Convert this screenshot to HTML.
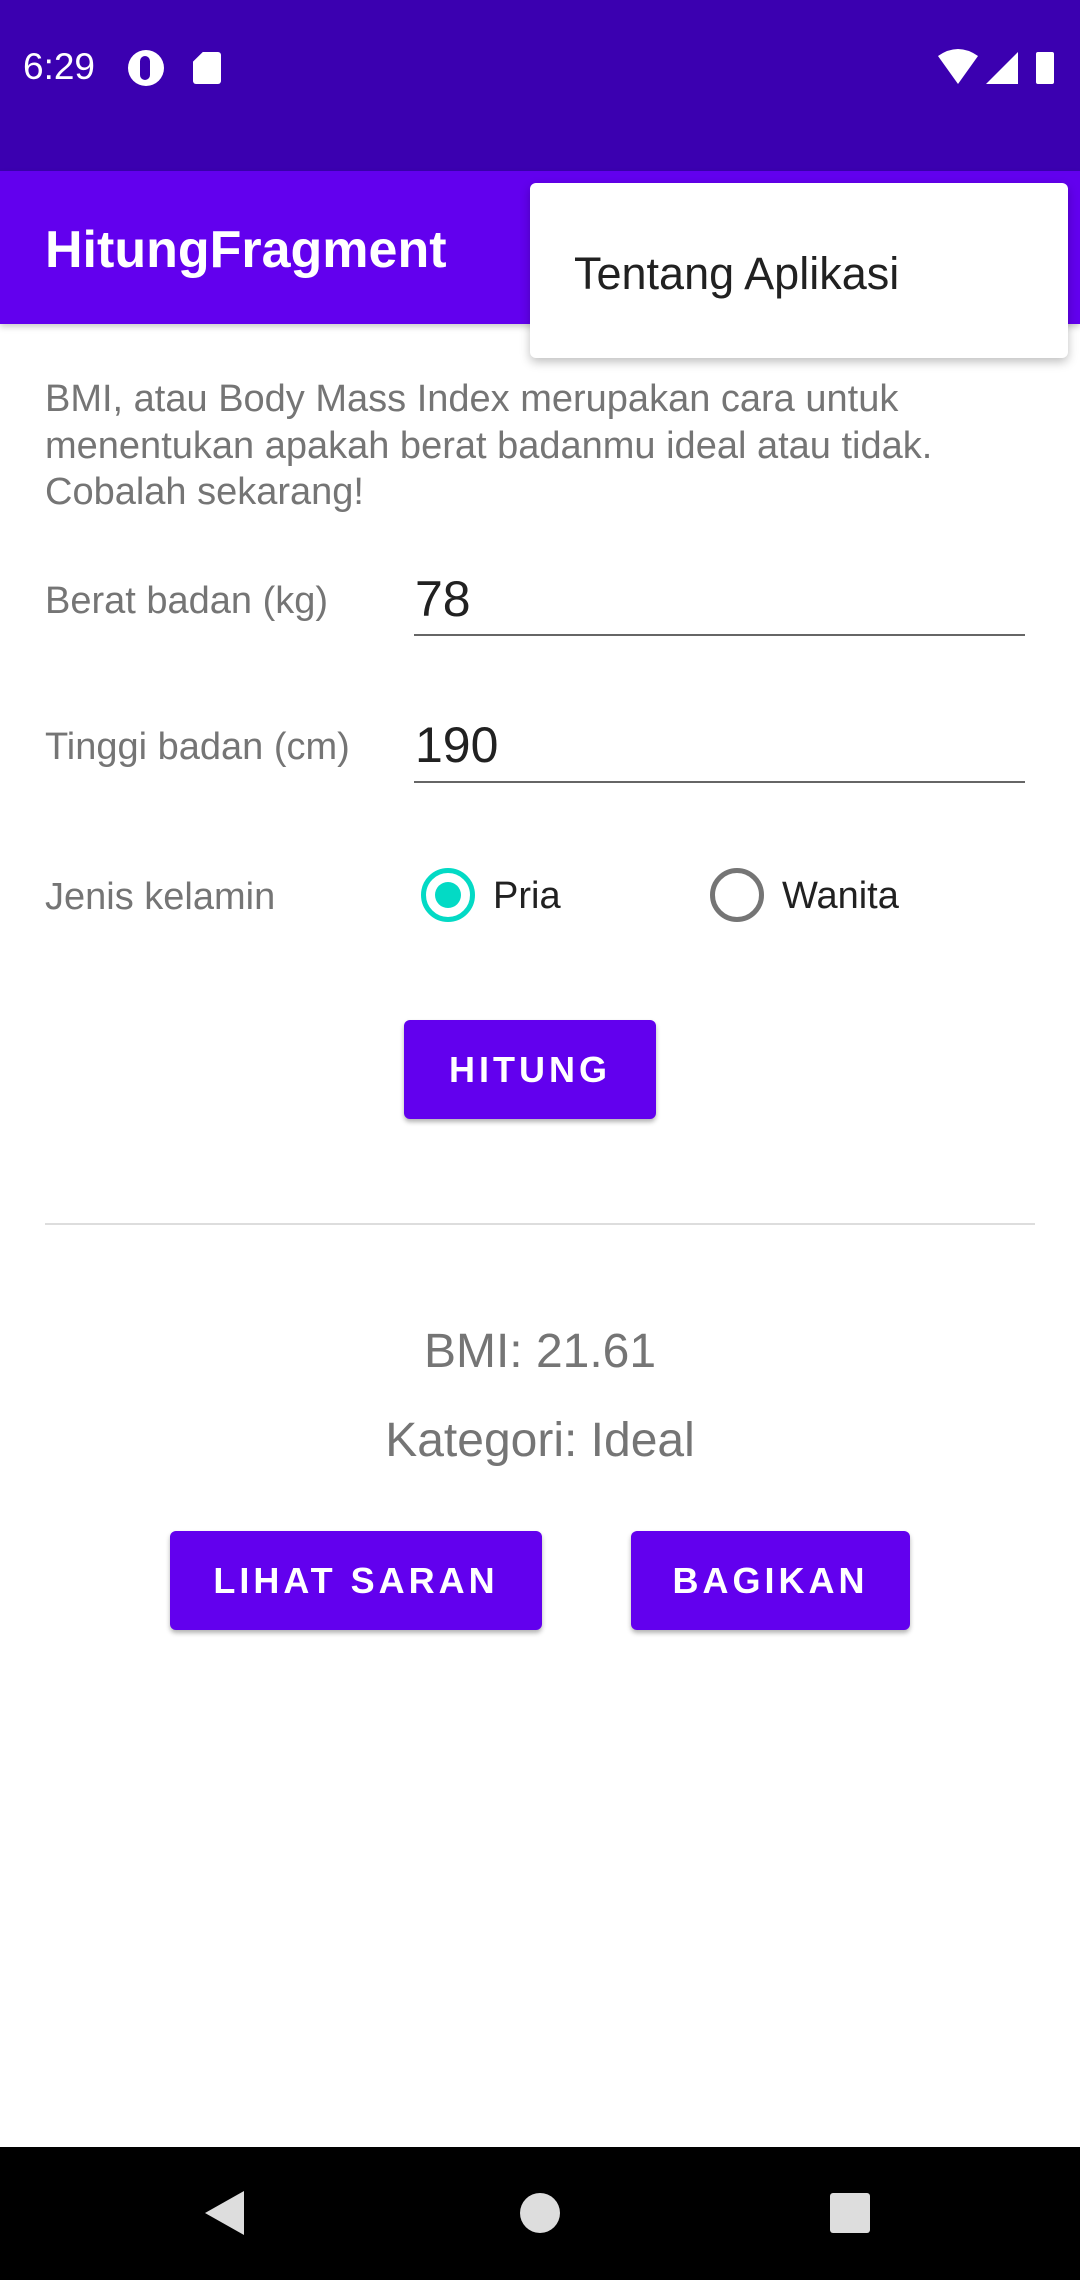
<!DOCTYPE html>
<html><head><meta charset="utf-8"><style>
*{margin:0;padding:0;box-sizing:border-box}
body{width:1080px;height:2280px;position:relative;background:#fff;font-family:"Liberation Sans",sans-serif;overflow:hidden}
.abs{position:absolute}
.lbl{color:#757575;font-size:38px;left:45px}
.btn{background:#6200EE;color:#fff;font-size:36px;font-weight:bold;letter-spacing:4px;border-radius:6px;display:flex;align-items:center;justify-content:center;box-shadow:0 3px 5px rgba(0,0,0,.3)}
</style></head><body>
<div class="abs" style="left:0;top:0;width:1080px;height:171px;background:#3b00b0"></div>
<div class="abs" style="left:23px;top:46px;color:#fff;font-size:37px">6:29</div>
<div class="abs" style="left:128px;top:50px;width:36px;height:36px;border-radius:50%;background:#fff"></div>
<div class="abs" style="left:140px;top:56px;width:10px;height:24px;border-radius:5px;background:#3b00b0"></div>
<div class="abs" style="left:193px;top:52px;width:28px;height:32px;background:#fff;border-radius:3px;clip-path:polygon(35% 0,100% 0,100% 100%,0 100%,0 30%)"></div>
<svg class="abs" style="left:936px;top:48px" width="120" height="40"><path d="M2 8 Q22 -6 42 8 L22 36Z" fill="#fff"/><path d="M50 36 L82 36 L82 4Z" fill="#fff"/><rect x="100" y="4" width="18" height="32" rx="2" fill="#fff"/></svg>
<div class="abs" style="left:0;top:171px;width:1080px;height:153px;background:#6200EE;box-shadow:0 3px 6px rgba(0,0,0,.2)"></div>
<div class="abs" style="left:45px;top:220px;color:#fff;font-size:52px;font-weight:bold">HitungFragment</div>
<div class="abs" style="left:530px;top:183px;width:538px;height:175px;background:#fff;border-radius:6px;box-shadow:0 4px 10px rgba(0,0,0,.25)"></div>
<div class="abs" style="left:574px;top:248px;color:#212121;font-size:45px">Tentang Aplikasi</div>
<div class="abs lbl" style="top:376px;line-height:46.5px;width:1000px">BMI, atau Body Mass Index merupakan cara untuk menentukan apakah berat badanmu ideal atau tidak. Cobalah sekarang!</div>
<div class="abs lbl" style="top:580px">Berat badan (kg)</div>
<div class="abs" style="left:415px;top:570px;font-size:50px;color:#212121">78</div>
<div class="abs" style="left:414px;top:634px;width:611px;height:2px;background:#666"></div>
<div class="abs lbl" style="top:726px">Tinggi badan (cm)</div>
<div class="abs" style="left:415px;top:716px;font-size:50px;color:#212121">190</div>
<div class="abs" style="left:414px;top:781px;width:611px;height:2px;background:#666"></div>
<div class="abs lbl" style="top:876px">Jenis kelamin</div>
<div class="abs" style="left:421px;top:868px;width:54px;height:54px;border-radius:50%;border:5px solid #03DAC5"></div>
<div class="abs" style="left:435px;top:882px;width:26px;height:26px;border-radius:50%;background:#03DAC5"></div>
<div class="abs" style="left:493px;top:875px;font-size:38px;color:#212121">Pria</div>
<div class="abs" style="left:710px;top:868px;width:54px;height:54px;border-radius:50%;border:5px solid #757575"></div>
<div class="abs" style="left:782px;top:875px;font-size:38px;color:#212121">Wanita</div>
<div class="abs btn" style="left:404px;top:1020px;width:252px;height:99px">HITUNG</div>
<div class="abs" style="left:45px;top:1223px;width:990px;height:2px;background:#ddd"></div>
<div class="abs" style="left:0;width:1080px;text-align:center;top:1324px;font-size:48px;color:#757575">BMI: 21.61</div>
<div class="abs" style="left:0;width:1080px;text-align:center;top:1413px;font-size:48px;color:#757575">Kategori: Ideal</div>
<div class="abs btn" style="left:170px;top:1531px;width:372px;height:99px">LIHAT SARAN</div>
<div class="abs btn" style="left:631px;top:1531px;width:279px;height:99px">BAGIKAN</div>
<div class="abs" style="left:0;top:2147px;width:1080px;height:133px;background:#000"></div>
<svg class="abs" style="left:0;top:2147px" width="1080" height="133"><path d="M244 44 L244 88 L205 66Z" fill="#ddd"/><circle cx="540" cy="66" r="20" fill="#ddd"/><rect x="830" y="46" width="40" height="40" rx="3" fill="#ddd"/></svg>
</body></html>
